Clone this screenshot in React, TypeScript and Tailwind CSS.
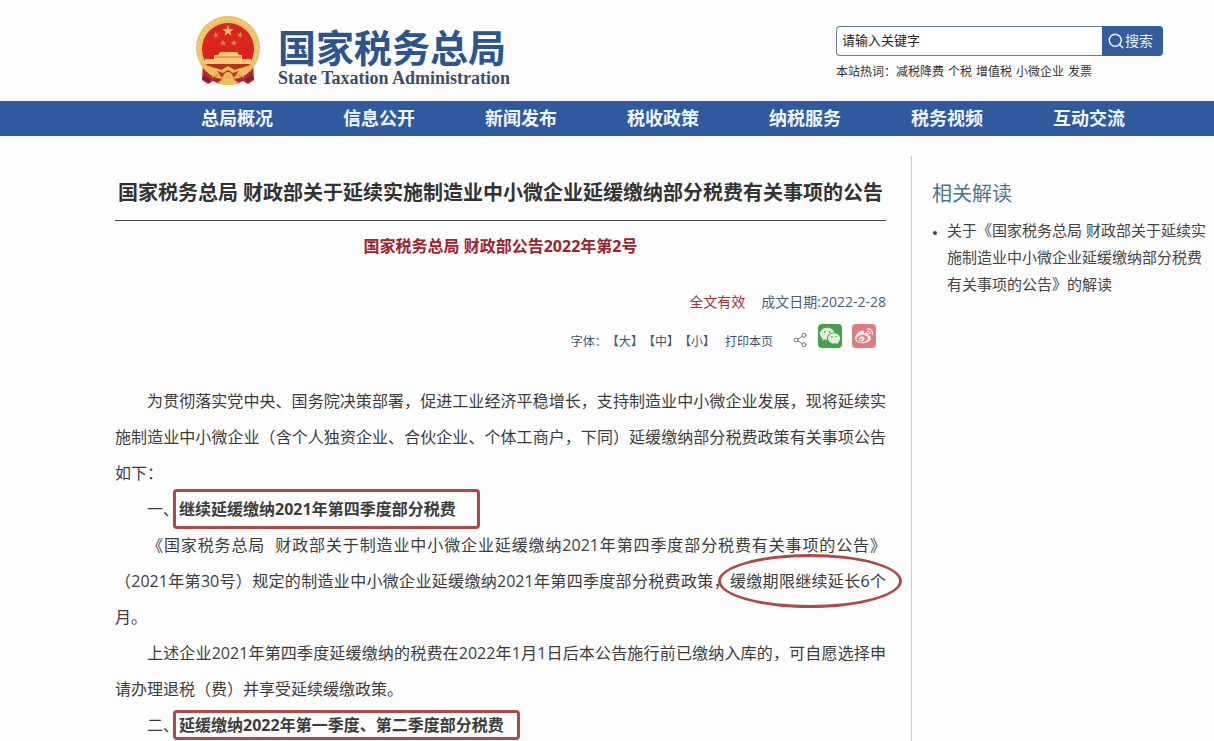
import type { ReactNode } from "react"
import React from "react"
import { Search, Share2 } from "lucide-react"
import { RiWechatFill, RiWeiboFill } from "react-icons/ri"

const NAV_ITEMS = ["总局概况", "信息公开", "新闻发布", "税收政策", "纳税服务", "税务视频", "互动交流"]
const HOT_WORDS = ["减税降费", "个税", "增值税", "小微企业", "发票"]
const FONT_SIZES = ["大", "中", "小"]

const STAR = "M0,-1 L0.225,-0.309 L0.951,-0.309 L0.363,0.118 L0.588,0.809 L0,0.382 L-0.588,0.809 L-0.363,0.118 L-0.951,-0.309 L-0.225,-0.309 Z"

const Emblem = function (): JSX.Element {
  return (
    <svg viewBox="0 0 66 70" className="h-[70px] w-[66px] shrink-0" aria-hidden="true">
      <path d="M8 47 L7 64 L13 68 L18 65 L24 68 L42 68 L48 65 L53 68 L59 64 L58 47 Z" fill="#c3222b" />
      <path d="M8 61 L15 65 M58 61 L51 65" stroke="#7d2032" strokeWidth="4" />
      <circle cx="33" cy="32" r="32" fill="#e6c26a" />
      <circle cx="33" cy="32" r="29" fill="none" stroke="#edcd80" strokeWidth="2" strokeDasharray="3 2" />
      <circle cx="33" cy="33" r="26" fill="#d8261f" />
      <path d={STAR} transform="translate(33 15) scale(6)" fill="#f6c95e" />
      <path d={STAR} transform="translate(21 19) rotate(-15) scale(3.5)" fill="#ee8058" />
      <path d={STAR} transform="translate(45 19) rotate(15) scale(3.5)" fill="#ee8058" />
      <path d={STAR} transform="translate(28 27) scale(3.5)" fill="#ee8058" />
      <path d={STAR} transform="translate(39 27) scale(3.5)" fill="#ee8058" />
      <path d="M25 36 H42 L44 39 H47 V43 H56 V48 H10 V43 H19 V39 H23 Z" fill="#f5cd77" />
      <path d="M20 41 H46" stroke="#d8702b" strokeWidth="1" />
      <path d="M10 48 H56 C51 55 43 58 33 58 C23 58 15 55 10 48 Z" fill="#b8301f" />
      <path d="M6 45 C14 52 20 51 26 54 L33 50 L40 54 C46 51 52 52 60 45 L55 54 L44 60 H22 L11 54 Z" fill="#edbd5c" />
      <path d="M22 55 L28 57 L33 54 L38 57 L44 55 L39 61 H27 Z" fill="#b8301f" />
      <circle cx="33" cy="61" r="5" fill="#e8b455" />
      <path d="M17 61 Q24 57 28 64 M49 61 Q42 57 38 64" fill="none" stroke="#d99a48" strokeWidth="2" />
      <path d="M22 67 L28 63 H38 L44 67 L38 69 H28 Z" fill="#edbd5c" />
    </svg>
  )
}

const Header = function (): JSX.Element {
  return (
    <header className="flex items-start justify-between pt-4 pr-[51px] pb-[13px] pl-[195px]">
      <a href="#" className="flex gap-[17px]">
        <Emblem />
        <span className="flex flex-col pt-2.5">
          <span className="text-[38px] leading-[42px] font-bold text-[#2b5490]">国家税务总局</span>
          <span className="font-['Liberation_Serif',serif] text-lg leading-5 font-bold text-[#3b4f66]">
            State Taxation Administration
          </span>
        </span>
      </a>
      <div className="w-[327px] pt-2.5">
        <form className="flex h-[30px]" onSubmit={(e) => e.preventDefault()}>
          <input
            type="text"
            aria-label="搜索关键字"
            placeholder="请输入关键字"
            className="min-w-0 flex-1 rounded-l border border-r-0 border-[#5f7f96] bg-white px-[5px] text-[13px] text-black outline-none placeholder:text-[#222]"
          />
          <button
            type="submit"
            className="flex w-[61px] items-center rounded-r bg-[#335c98] pl-[5px] text-sm text-[#e6f3fb]"
          >
            <Search className="size-[18px]" strokeWidth={2} />
            搜索
          </button>
        </form>
        <div className="mt-[7px] flex text-xs leading-[18px] text-[#333]">
          <span>本站热词：</span>
          <div className="flex gap-1">
            {HOT_WORDS.map((word) => (
              <a key={word} href="#">
                {word}
              </a>
            ))}
          </div>
        </div>
      </div>
    </header>
  )
}

const Nav = function (): JSX.Element {
  return (
    <nav className="grid h-[35px] grid-cols-7 items-center bg-[#3159a0] pr-[54px] pl-[166px] text-center text-lg leading-[35px] font-bold text-[#eef8fd]">
      {NAV_ITEMS.map((item) => (
        <a key={item} href="#">
          {item}
        </a>
      ))}
    </nav>
  )
}

const Toolbar = function (): JSX.Element {
  return (
    <div className="mt-2.5 flex items-end justify-end pr-2.5 text-xs text-[#3f566b]">
      <span className="leading-3">字体：</span>
      {FONT_SIZES.map((size) => (
        <button key={size} type="button" className="leading-3">
          【{size}】
        </button>
      ))}
      <button type="button" className="ml-2.5 leading-3">
        打印本页
      </button>
      <button type="button" aria-label="分享" className="ml-[19px] text-[#777]">
        <Share2 className="size-4" strokeWidth={1.5} />
      </button>
      <button
        type="button"
        aria-label="微信"
        className="ml-2.5 flex size-6 items-center justify-center rounded-sm bg-[#46a04e] text-[#e2f2d8]"
      >
        <RiWechatFill className="size-[22px]" />
      </button>
      <button
        type="button"
        aria-label="微博"
        className="ml-2.5 flex size-6 items-center justify-center rounded-sm bg-[#d97f7f] text-[#fbe9e2]"
      >
        <RiWeiboFill className="size-5" />
      </button>
    </div>
  )
}

interface MarkedHeadingProps {
  order: string
  frame: string
  children: ReactNode
}

const MarkedHeading = function ({ order, frame, children }: MarkedHeadingProps): JSX.Element {
  return (
    <h2 className="indent-8">
      {order}、
      <strong className="relative indent-0">
        {children}
        <span className={`absolute rounded-sm border-[3px] border-[#b2474a] ${frame}`} />
      </strong>
    </h2>
  )
}

const Article = function (): JSX.Element {
  return (
    <article className="min-w-0 flex-1 pt-[42px] pr-[25px] pl-[115px]">
      <h1 className="border-b border-[#444] pb-3 text-center text-xl leading-[30px] font-bold whitespace-nowrap text-[#333]">
        国家税务总局 财政部关于延续实施制造业中小微企业延缓缴纳部分税费有关事项的公告
      </h1>
      <p className="mt-[13px] text-center leading-6 font-bold text-[#9e222c]">国家税务总局 财政部公告2022年第2号</p>
      <div className="mt-8 flex justify-end gap-4 text-sm leading-6">
        <span className="text-[#a3303d]">全文有效</span>
        <span className="text-[#45627a]">成文日期:2022-2-28</span>
      </div>
      <Toolbar />
      <div className="mt-[35px] text-justify leading-9 text-[#3c3c3c]">
        <p className="indent-8">
          为贯彻落实党中央、国务院决策部署，促进工业经济平稳增长，支持制造业中小微企业发展，现将延续实施制造业中小微企业（含个人独资企业、合伙企业、个体工商户，下同）延缓缴纳部分税费政策有关事项公告如下：
        </p>
        <MarkedHeading order="一" frame="-top-[9px] -right-6 -bottom-[9px] -left-1.5">
          继续延缓缴纳2021年第四季度部分税费
        </MarkedHeading>
        <p className="indent-8">
          《国家税务总局&nbsp; 财政部关于制造业中小微企业延缓缴纳2021年第四季度部分税费有关事项的公告》（2021年第30号）规定的制造业中小微企业延缓缴纳2021年第四季度部分税费政策，
          <span className="relative">
            缓缴期限继续延长6个
            <span className="absolute -top-4 -right-4 -bottom-4 -left-3 rounded-[50%] border-[3px] border-[#b2474a]" />
          </span>
          月。
        </p>
        <p className="indent-8">
          上述企业2021年第四季度延缓缴纳的税费在2022年1月1日后本公告施行前已缴纳入库的，可自愿选择申请办理退税（费）并享受延续缓缴政策。
        </p>
        <MarkedHeading order="二" frame="-top-1 -right-4 -bottom-1 -left-1.5">
          延缓缴纳2022年第一季度、第二季度部分税费
        </MarkedHeading>
      </div>
    </article>
  )
}

const Related = function (): JSX.Element {
  return (
    <aside className="mt-5 w-[303px] shrink-0 border-l border-[#ccc] pt-[23px] pr-1 pl-5">
      <h2 className="text-xl leading-[30px] text-[#4b7590]">相关解读</h2>
      <ul className="mt-2 list-disc pl-[15px] text-[15px] leading-[27px] text-[#444] marker:text-[10px]">
        <li>
          <a href="#">关于《国家税务总局 财政部关于延续实施制造业中小微企业延缓缴纳部分税费有关事项的公告》的解读</a>
        </li>
      </ul>
    </aside>
  )
}

export default function App(): JSX.Element {
  return (
    <div className="flex h-screen flex-col overflow-hidden bg-[#fdfdfd] font-['Open_Sans','Noto_Sans_CJK_SC',sans-serif]">
      <Header />
      <Nav />
      <main className="flex min-h-0 flex-1">
        <Article />
        <Related />
      </main>
    </div>
  )
}
